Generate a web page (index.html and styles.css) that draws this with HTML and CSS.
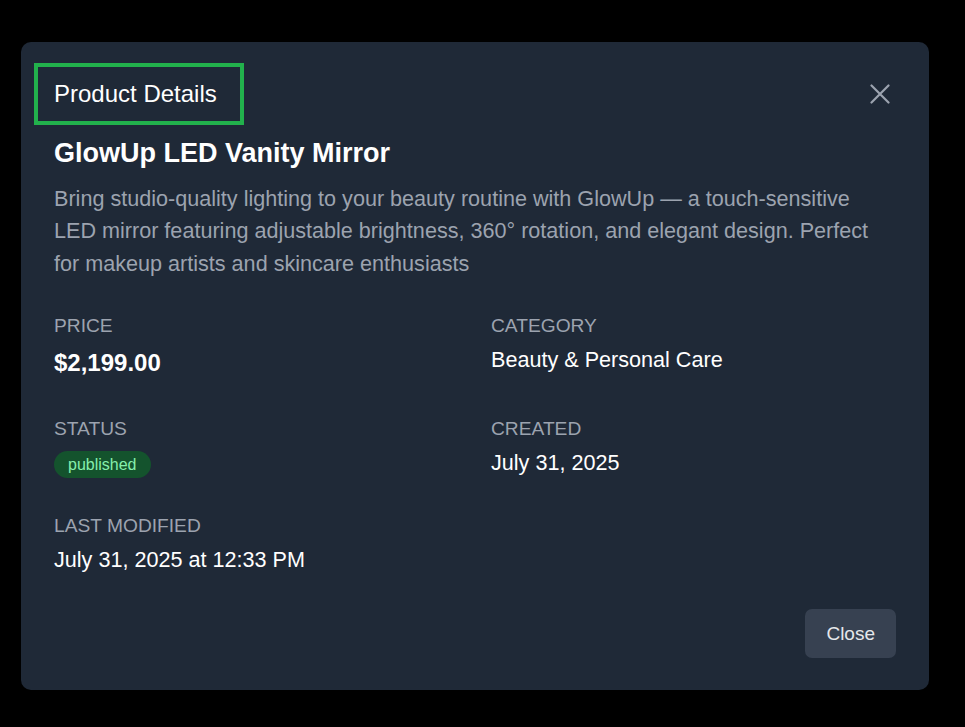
FILE: index.html
```html
<!DOCTYPE html>
<html lang="en">
<head>
<meta charset="utf-8">
<title>Product Details</title>
<link rel="stylesheet" href="styles.css">
</head>
<body>
<div class="modal" role="dialog" aria-labelledby="dlg-title">
  <div class="header">
    <h2 class="title" id="dlg-title">Product Details</h2>
    <button class="icon-btn" aria-label="Close">
      <svg width="20" height="20" viewBox="0 0 20 20" fill="none" stroke="currentColor" stroke-width="2.2" stroke-linecap="round">
        <path d="M1.5 1.5L18.5 18.5M18.5 1.5L1.5 18.5"/>
      </svg>
    </button>
  </div>
  <h3 class="name">GlowUp LED Vanity Mirror</h3>
  <p class="desc">Bring studio-quality lighting to your beauty routine with GlowUp — a touch-sensitive LED mirror featuring adjustable brightness, 360° rotation, and elegant design. Perfect for makeup artists and skincare enthusiasts</p>
  <div class="fields">
    <div class="field">
      <div class="label">Price</div>
      <div class="value price">$2,199.00</div>
    </div>
    <div class="field">
      <div class="label">Category</div>
      <div class="value">Beauty &amp; Personal Care</div>
    </div>
    <div class="field">
      <div class="label">Status</div>
      <div class="value status"><span class="badge">published</span></div>
    </div>
    <div class="field">
      <div class="label">Created</div>
      <div class="value">July 31, 2025</div>
    </div>
    <div class="field">
      <div class="label">Last Modified</div>
      <div class="value">July 31, 2025 at 12:33 PM</div>
    </div>
  </div>
  <div class="footer">
    <button class="btn">Close</button>
  </div>
</div>
</body>
</html>
```

FILE: styles.css
```css
html, body {
  margin: 0;
  background: #000;
}
body {
  padding: 42px 36px 0 21px;
  font-family: "Liberation Sans", Arial, sans-serif;
  color: #fff;
}
.modal {
  background: #1f2937;
  border-radius: 10px;
  padding: 21px 33px 32px;
}
.header {
  display: flex;
  justify-content: space-between;
  align-items: center;
}
.title {
  margin: 0 0 0 -20px;
  border: 4px solid #22b14c;
  padding: 13px 23px 14px 16px;
  font-size: 24px;
  line-height: 27px;
  font-weight: 400;
  color: #fff;
}
.icon-btn {
  width: 32px;
  height: 32px;
  padding: 0;
  border: 0;
  background: transparent;
  color: #9ca3af;
  display: flex;
  align-items: center;
  justify-content: center;
}
.name {
  margin: 10px 0 0;
  font-size: 27px;
  line-height: 36px;
  font-weight: 700;
  color: #fff;
}
.desc {
  margin: 12px 0 0;
  font-size: 21.6px;
  line-height: 32.4px;
  color: #9ca3af;
}
.fields {
  margin-top: 32px;
  display: grid;
  grid-template-columns: 1fr 1fr;
  column-gap: 32px;
  row-gap: 35px;
}
.label {
  font-size: 19.2px;
  line-height: 27px;
  text-transform: uppercase;
  color: #9ca3af;
}
.value {
  margin-top: 7px;
  font-size: 21.6px;
  line-height: 28px;
  color: #fff;
}
.value.price {
  font-size: 24px;
  line-height: 34px;
  font-weight: 700;
}
.value.status {
  height: 28px;
  display: flex;
  align-items: flex-start;
}
.badge {
  margin-top: 2px;
  height: 27px;
  line-height: 27px;
  padding: 0 14px;
  border-radius: 14px;
  background: #14532d;
  color: #86efac;
  font-size: 16px;
}
.footer {
  margin-top: 35px;
  display: flex;
  justify-content: flex-end;
}
.btn {
  height: 49px;
  padding: 0 21px;
  border: 0;
  border-radius: 7px;
  background: #374151;
  color: #e5e7eb;
  font-family: "Liberation Sans", Arial, sans-serif;
  font-size: 19px;
}
```
